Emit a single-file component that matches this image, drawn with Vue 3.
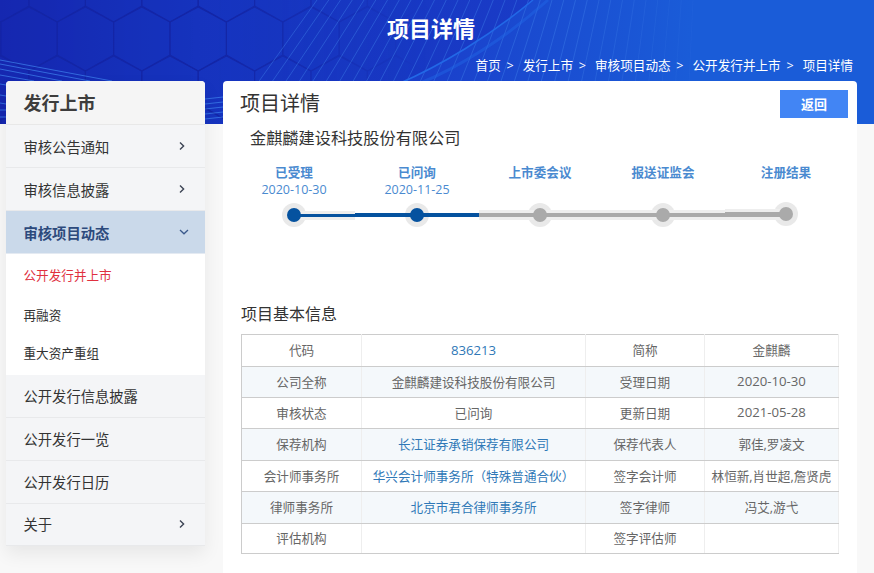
<script setup>
const W = 874
const hexes = []
for (let r = -1; r < 3; r++) {
  for (let c = -1; c < 12; c++) {
    const cx = c * 56.4 + (r % 2 === 0 ? 29 : 57.2)
    const top = 7 + r * 49
    hexes.push(`${cx},${top} ${cx + 28.2},${top + 15} ${cx + 28.2},${top + 48} ${cx},${top + 64} ${cx - 28.2},${top + 48} ${cx - 28.2},${top + 15}`)
  }
}
const fan = Array.from({ length: 33 }, (_, i) => {
  const x0 = 257 + i * 13.5
  return { x0, x1: x0 + 60 - i * 1.75, o: i < 22 ? 0.5 : Math.max(0.12, 0.5 - (i - 22) * 0.04) }
})
const streaks = [
  [0, 60, 112, 81], [0, 64, 90, 81], [0, 69, 62, 81], [0, 75, 34, 81],
  [0, 84, 6, 85], [0, 95, 6, 96], [0, 103, 6, 104], [0, 110, 6, 110], [0, 117, 6, 117],
  [205, 99, 223, 97], [205, 104, 223, 102], [205, 109, 223, 107], [205, 114, 223, 112], [205, 119, 223, 117]
]

const crumbs = ['首页', '发行上市', '审核项目动态', '公开发行并上市', '项目详情']

const menu = [
  { label: '审核公告通知', icon: 'right' },
  { label: '审核信息披露', icon: 'right' },
  { label: '审核项目动态', icon: 'down', active: true },
  { sub: ['公开发行并上市', '再融资', '重大资产重组'] },
  { label: '公开发行信息披露' },
  { label: '公开发行一览' },
  { label: '公开发行日历' },
  { label: '关于', icon: 'right' }
]

const steps = [
  { label: '已受理', date: '2020-10-30', done: true },
  { label: '已问询', date: '2020-11-25', done: true },
  { label: '上市委会议' },
  { label: '报送证监会' },
  { label: '注册结果' }
]

const segments = [
  { left: 61.5, width: 61, cls: 'seg dark halo thin' },
  { left: 122.5, width: 124, cls: 'seg dark' },
  { left: 246.5, width: 246, cls: 'seg gray halo' },
  { left: 492.5, width: 61, cls: 'seg gray halo high' }
]

const rows = [
  ['代码', { t: '836213', link: true, num: true }, '简称', { t: '金麒麟' }],
  ['公司全称', { t: '金麒麟建设科技股份有限公司' }, '受理日期', { t: '2020-10-30', num: true }],
  ['审核状态', { t: '已问询' }, '更新日期', { t: '2021-05-28', num: true }],
  ['保荐机构', { t: '长江证券承销保荐有限公司', link: true }, '保荐代表人', { t: '郭佳,罗凌文' }],
  ['会计师事务所', { t: '华兴会计师事务所（特殊普通合伙）', link: true }, '签字会计师', { t: '林恒新,肖世超,詹贤虎' }],
  ['律师事务所', { t: '北京市君合律师事务所', link: true }, '签字律师', { t: '冯艾,游弋' }],
  ['评估机构', { t: '' }, '签字评估师', { t: '' }]
]
</script>

<template>
  <div class="page">
    <header class="banner">
      <svg class="decor" :width="W" height="124" :viewBox="`0 0 ${W} 124`" aria-hidden="true">
        <defs>
          <linearGradient id="bg" gradientUnits="userSpaceOnUse" x1="0" y1="0" x2="560" y2="0">
            <stop offset="0" stop-color="#1526ae" />
            <stop offset="0.35" stop-color="#1533bd" />
            <stop offset="1" stop-color="#1a3cc8" />
          </linearGradient>
          <linearGradient id="wing" gradientUnits="userSpaceOnUse" x1="420" y1="0" x2="690" y2="0">
            <stop offset="0" stop-color="#1a3fcb" />
            <stop offset="1" stop-color="#1a5cd8" />
          </linearGradient>
          <linearGradient id="fade" gradientUnits="userSpaceOnUse" x1="0" y1="0" x2="430" y2="0">
            <stop offset="0" stop-color="#fff" stop-opacity="0.7" />
            <stop offset="0.5" stop-color="#fff" stop-opacity="0.85" />
            <stop offset="1" stop-color="#fff" stop-opacity="0" />
          </linearGradient>
          <mask id="hexfade" maskUnits="userSpaceOnUse" x="0" y="0" width="700" height="124">
            <rect width="700" height="124" fill="url(#fade)" />
          </mask>
        </defs>
        <rect :width="W" height="124" fill="url(#bg)" />
        <g mask="url(#hexfade)">
          <polygon v-for="(h, i) in hexes" :key="i" :points="h" fill="#1b3ccb" fill-opacity="0.1" stroke="#1424a2" stroke-width="1.1" />
        </g>
        <path d="M398 84 C 440 66 490 36 533 0 L874 0 L874 124 L330 124 Z" fill="url(#wing)" />
        <line v-for="(l, i) in fan" :key="'f' + i" :x1="l.x0" y1="84" :x2="l.x1" y2="0" stroke="#3f7ee8" :stroke-opacity="l.o" stroke-width="0.9" />
        <path d="M398 84 C 440 66 490 36 533 0" fill="none" stroke="#2268e6" stroke-width="1.6" />
        <path d="M418 84 C 458 68 506 38 548 0" fill="none" stroke="#2268e6" stroke-opacity="0.45" stroke-width="3" />
        <line v-for="(s, i) in streaks" :key="'s' + i" :x1="s[0]" :y1="s[1]" :x2="s[2]" :y2="s[3]" stroke="#3f83ee" stroke-opacity="0.7" stroke-width="1" />
      </svg>
      <h1 class="title">项目详情</h1>
      <nav class="crumbs">
        <template v-for="(c, i) in crumbs" :key="c">
          <span>{{ c }}</span>
          <span v-if="i < crumbs.length - 1" class="sep">&gt;</span>
        </template>
      </nav>
    </header>

    <main class="main">
      <aside class="side">
        <div class="side-title">发行上市</div>
        <template v-for="(m, i) in menu" :key="i">
          <ul v-if="m.sub" class="sub">
            <li v-for="(s, j) in m.sub" :key="s" :class="{ current: j === 0 }">{{ s }}</li>
          </ul>
          <div v-else class="item" :class="{ active: m.active }">
            <span>{{ m.label }}</span>
            <svg v-if="m.icon === 'right'" class="chev" width="6" height="10" viewBox="0 0 6 10">
              <path d="M1 1.5 L4.6 5 L1 8.5" fill="none" stroke="#3c4454" stroke-width="1.4" />
            </svg>
            <svg v-if="m.icon === 'down'" class="chev down" width="10" height="6" viewBox="0 0 10 6">
              <path d="M1 1 L5 4.8 L9 1" fill="none" stroke="#3b5a8c" stroke-width="1.3" />
            </svg>
          </div>
        </template>
      </aside>

      <section class="card">
        <div class="card-head">
          <h2>项目详情</h2>
          <button class="back">返回</button>
        </div>
        <div class="company">金麒麟建设科技股份有限公司</div>

        <div class="steps">
          <div v-for="s in steps" :key="s.label" class="step">
            <div class="step-label">{{ s.label }}</div>
            <div class="step-date">{{ s.date }}</div>
          </div>
        </div>
        <div class="track">
          <div v-for="(g, i) in segments" :key="i" :class="g.cls" :style="{ left: g.left + 'px', width: g.width + 'px' }"></div>
          <div v-for="s in steps" :key="s.label" class="cell">
            <span class="node" :class="{ done: s.done }"></span>
          </div>
        </div>

        <h3 class="section">项目基本信息</h3>
        <table class="info">
          <colgroup>
            <col class="c1" /><col class="c2" /><col class="c3" /><col class="c4" />
          </colgroup>
          <tbody>
            <tr v-for="(r, i) in rows" :key="i">
              <td>{{ r[0] }}</td>
              <td :class="{ link: r[1].link, num: r[1].num }">{{ r[1].t }}</td>
              <td>{{ r[2] }}</td>
              <td :class="{ num: r[3].num }">{{ r[3].t }}</td>
            </tr>
          </tbody>
        </table>
      </section>
    </main>
  </div>
</template>

<style>
html, body { margin: 0; overflow: hidden; background: #f8f8f8; }
</style>

<style scoped>
.page {
  position: relative;
  width: 874px;
  height: 573px;
  overflow: hidden;
  background: #f8f8f8;
  font-family: "Open Sans", "Noto Sans CJK SC", sans-serif;
  font-size: 13px;
  color: #333;
}
.banner {
  position: relative;
  height: 124px;
  color: #fff;
}
.decor { position: absolute; left: 0; top: 0; display: block; }
.title {
  position: relative;
  margin: 0;
  padding-top: 13px;
  text-align: center;
  font-size: 22px;
  line-height: 30px;
  font-weight: 700;
  transform: translateX(-6px);
}
.crumbs {
  position: relative;
  display: flex;
  justify-content: flex-end;
  margin-top: 13px;
  padding-right: 21px;
  font-size: 12.6px;
  line-height: 20px;
}
.sep { margin: 0 9px 0 5.75px; }

.main {
  position: relative;
  display: flex;
  align-items: flex-start;
  gap: 18px;
  margin-top: -43px;
  padding-left: 6px;
}
.side {
  flex: none;
  width: 199px;
  background: #f4f5f7;
  box-shadow: 0 8px 18px rgba(0, 0, 0, 0.07);
  border-radius: 4px 4px 0 0;
}
.side-title {
  box-sizing: border-box;
  height: 44px;
  padding-left: 17.5px;
  line-height: 44px;
  font-size: 18px;
  font-weight: 700;
  color: #3d3d3d;
  background: #f5f5f5;
  border-bottom: 1px solid #e8e8e8;
  border-radius: 4px 4px 0 0;
}
.item {
  box-sizing: border-box;
  display: flex;
  align-items: center;
  justify-content: space-between;
  height: 43px;
  padding: 0 20px 0 17.5px;
  font-size: 14.3px;
  color: #333;
  border-bottom: 1px solid #e8e9eb;
}
.sub ~ .item { padding-bottom: 2px; }
.item:last-child { height: 42px; }
.item.active {
  background: #cad9ea;
  color: #2d4a7c;
  font-weight: 700;
  border-bottom-color: #e4eaf2;
}
.chev.down { margin-right: -4px; }
.sub {
  margin: 0;
  padding: 0;
  list-style: none;
  background: #fff;
  height: 121px;
}
.sub li {
  height: 40px;
  padding-left: 17.5px;
  line-height: 44px;
  font-size: 12.6px;
  color: #333;
}
.sub li:last-child { line-height: 40px; }
.sub li.current { color: #e0303f; }

.card {
  box-sizing: border-box;
  flex: none;
  width: 634px;
  height: 540px;
  background: #fff;
  border-radius: 4px 4px 0 0;
}
.card-head {
  display: flex;
  justify-content: space-between;
  align-items: flex-start;
  height: 45px;
  padding: 9px 9px 0 17px;
  box-sizing: border-box;
}
.card-head h2 {
  margin: 0;
  font-size: 20px;
  line-height: 28px;
  font-weight: 400;
  color: #333;
}
.back {
  width: 68px;
  height: 28px;
  padding: 0 0 2px;
  border: 0;
  background: #4285f4;
  color: #fff;
  font: 700 13px "Noto Sans CJK SC", sans-serif;
}
.company {
  padding-left: 27px;
  font-size: 16.2px;
  line-height: 24px;
  color: #333;
}
.steps, .track {
  display: flex;
  margin-left: 9.5px;
  width: 615px;
}
.steps { margin-top: 14px; }
.step { width: 123px; text-align: center; }
.step-label {
  font-weight: 700;
  font-size: 12.6px;
  line-height: 18px;
  color: #4a8ad0;
}
.step-date {
  font-size: 12.5px;
  line-height: 15px;
  color: #4a8ad0;
}
.track {
  position: relative;
  height: 24px;
  margin-top: 6px;
}
.cell {
  position: relative;
  width: 123px;
  display: flex;
  justify-content: center;
}
.cell:last-child { top: -1px; }
.node {
  position: relative;
  width: 24px;
  height: 24px;
  border-radius: 50%;
  background: #e9e9e9;
}
.node::after {
  content: "";
  position: absolute;
  left: 5px;
  top: 5px;
  z-index: 2;
  width: 14px;
  height: 14px;
  border-radius: 50%;
  background: #aaa;
}
.node.done::after { background: #05529f; }
.seg { position: absolute; z-index: 1; top: 10px; height: 4px; }
.seg.dark { background: #05529f; }
.seg.gray { background: #aaa; }
.seg.thin { top: 11px; height: 3px; }
.seg.halo { box-shadow: 0 -3px 0 #eeeeee, 0 3px 0 #eeeeee; }
.seg.high { top: 9px; height: 5px; }

.section {
  margin: 0;
  padding: 76px 0 0 18px;
  font-size: 16px;
  line-height: 22px;
  font-weight: 400;
  color: #333;
}
.info {
  margin: 9px 0 0 18px;
  width: 597px;
  table-layout: fixed;
  border-collapse: collapse;
  border: 1px solid #ccc;
  color: #666;
  font-size: 12.6px;
}
.c1 { width: 120px; }
.c2 { width: 224px; }
.c3 { width: 119px; }
.c4 { width: 134px; }
.info td {
  box-sizing: border-box;
  height: 31px;
  padding: 0 0 2px;
  text-align: center;
  border-bottom: 1px solid #ccc;
  border-right: 1px solid #eee;
  white-space: nowrap;
}
.info tr:nth-child(1) td,
.info tr:nth-child(4) td,
.info tr:nth-child(6) td { height: 32px; }
.info tr:nth-child(7) td { height: 30px; }
.info tr:nth-child(even) td { background: #f4f8fb; }
.info td.link { color: #2f78b7; }
.info td.num { font-size: 13.2px; }
</style>
